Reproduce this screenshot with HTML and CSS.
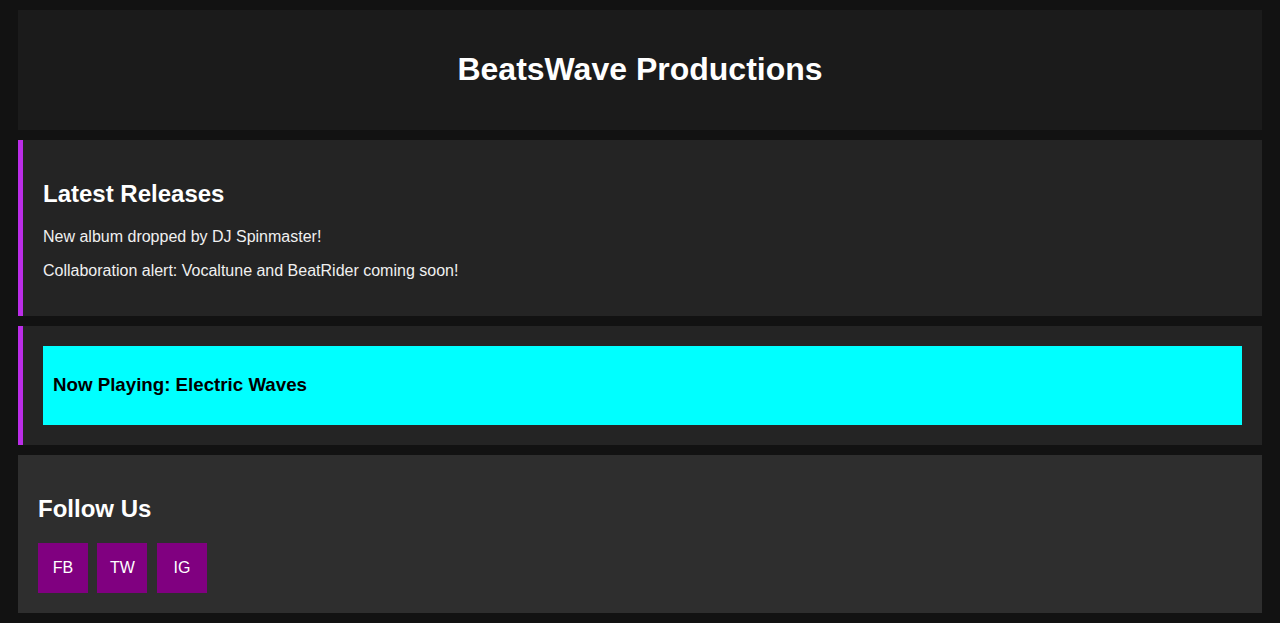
FILE: index.html
```html
<!DOCTYPE html>
<html lang="en">
<head>
<meta charset="utf-8">
<title>BeatsWave Productions</title>
<link rel="stylesheet" href="styles.css">
</head>
<body>
<header class="site-header">
  <h1>BeatsWave Productions</h1>
</header>
<section class="panel accent">
  <h2>Latest Releases</h2>
  <p>New album dropped by DJ Spinmaster!</p>
  <p>Collaboration alert: Vocaltune and BeatRider coming soon!</p>
</section>
<section class="panel accent">
  <div class="now-playing">
    <h3>Now Playing: Electric Waves</h3>
  </div>
</section>
<section class="panel social">
  <h2>Follow Us</h2>
  <div class="social-links">
    <a class="social-btn" href="#">FB</a>
    <a class="social-btn" href="#">TW</a>
    <a class="social-btn" href="#">IG</a>
  </div>
</section>
</body>
</html>
```
FILE: styles.css
```css
html {
  background: #121212;
}
body {
  margin: 0;
  padding: 10px 18px;
  background: #121212;
  color: #ffffff;
  font-family: "Liberation Sans", Arial, sans-serif;
  display: flex;
  flex-direction: column;
  gap: 10px;
}
.site-header {
  padding: 20px;
  background: #1b1b1b;
  text-align: center;
}
.site-header h1 {
  font-size: 32px;
  margin: 21.44px 0;
}
.panel {
  padding: 20px;
  background: #242424;
}
.panel.accent {
  border-left: 5px solid #bb2de8;
}
.panel h2 {
  font-size: 24px;
  margin: 19.92px 0;
}
.panel p {
  margin: 16px 0;
  font-size: 16px;
  color: #f0f0f0;
}
.now-playing {
  background: #00ffff;
  color: #000000;
  padding: 10px;
}
.now-playing h3 {
  font-size: 18.72px;
  margin: 18.72px 0;
}
.panel.social {
  background: #2e2e2e;
}
.social-links {
  font-size: 16px;
}
.social-btn {
  display: inline-block;
  width: 50px;
  height: 50px;
  line-height: 50px;
  margin-right: 5px;
  background: #800080;
  color: #ffffff;
  text-align: center;
  text-decoration: none;
}
```
